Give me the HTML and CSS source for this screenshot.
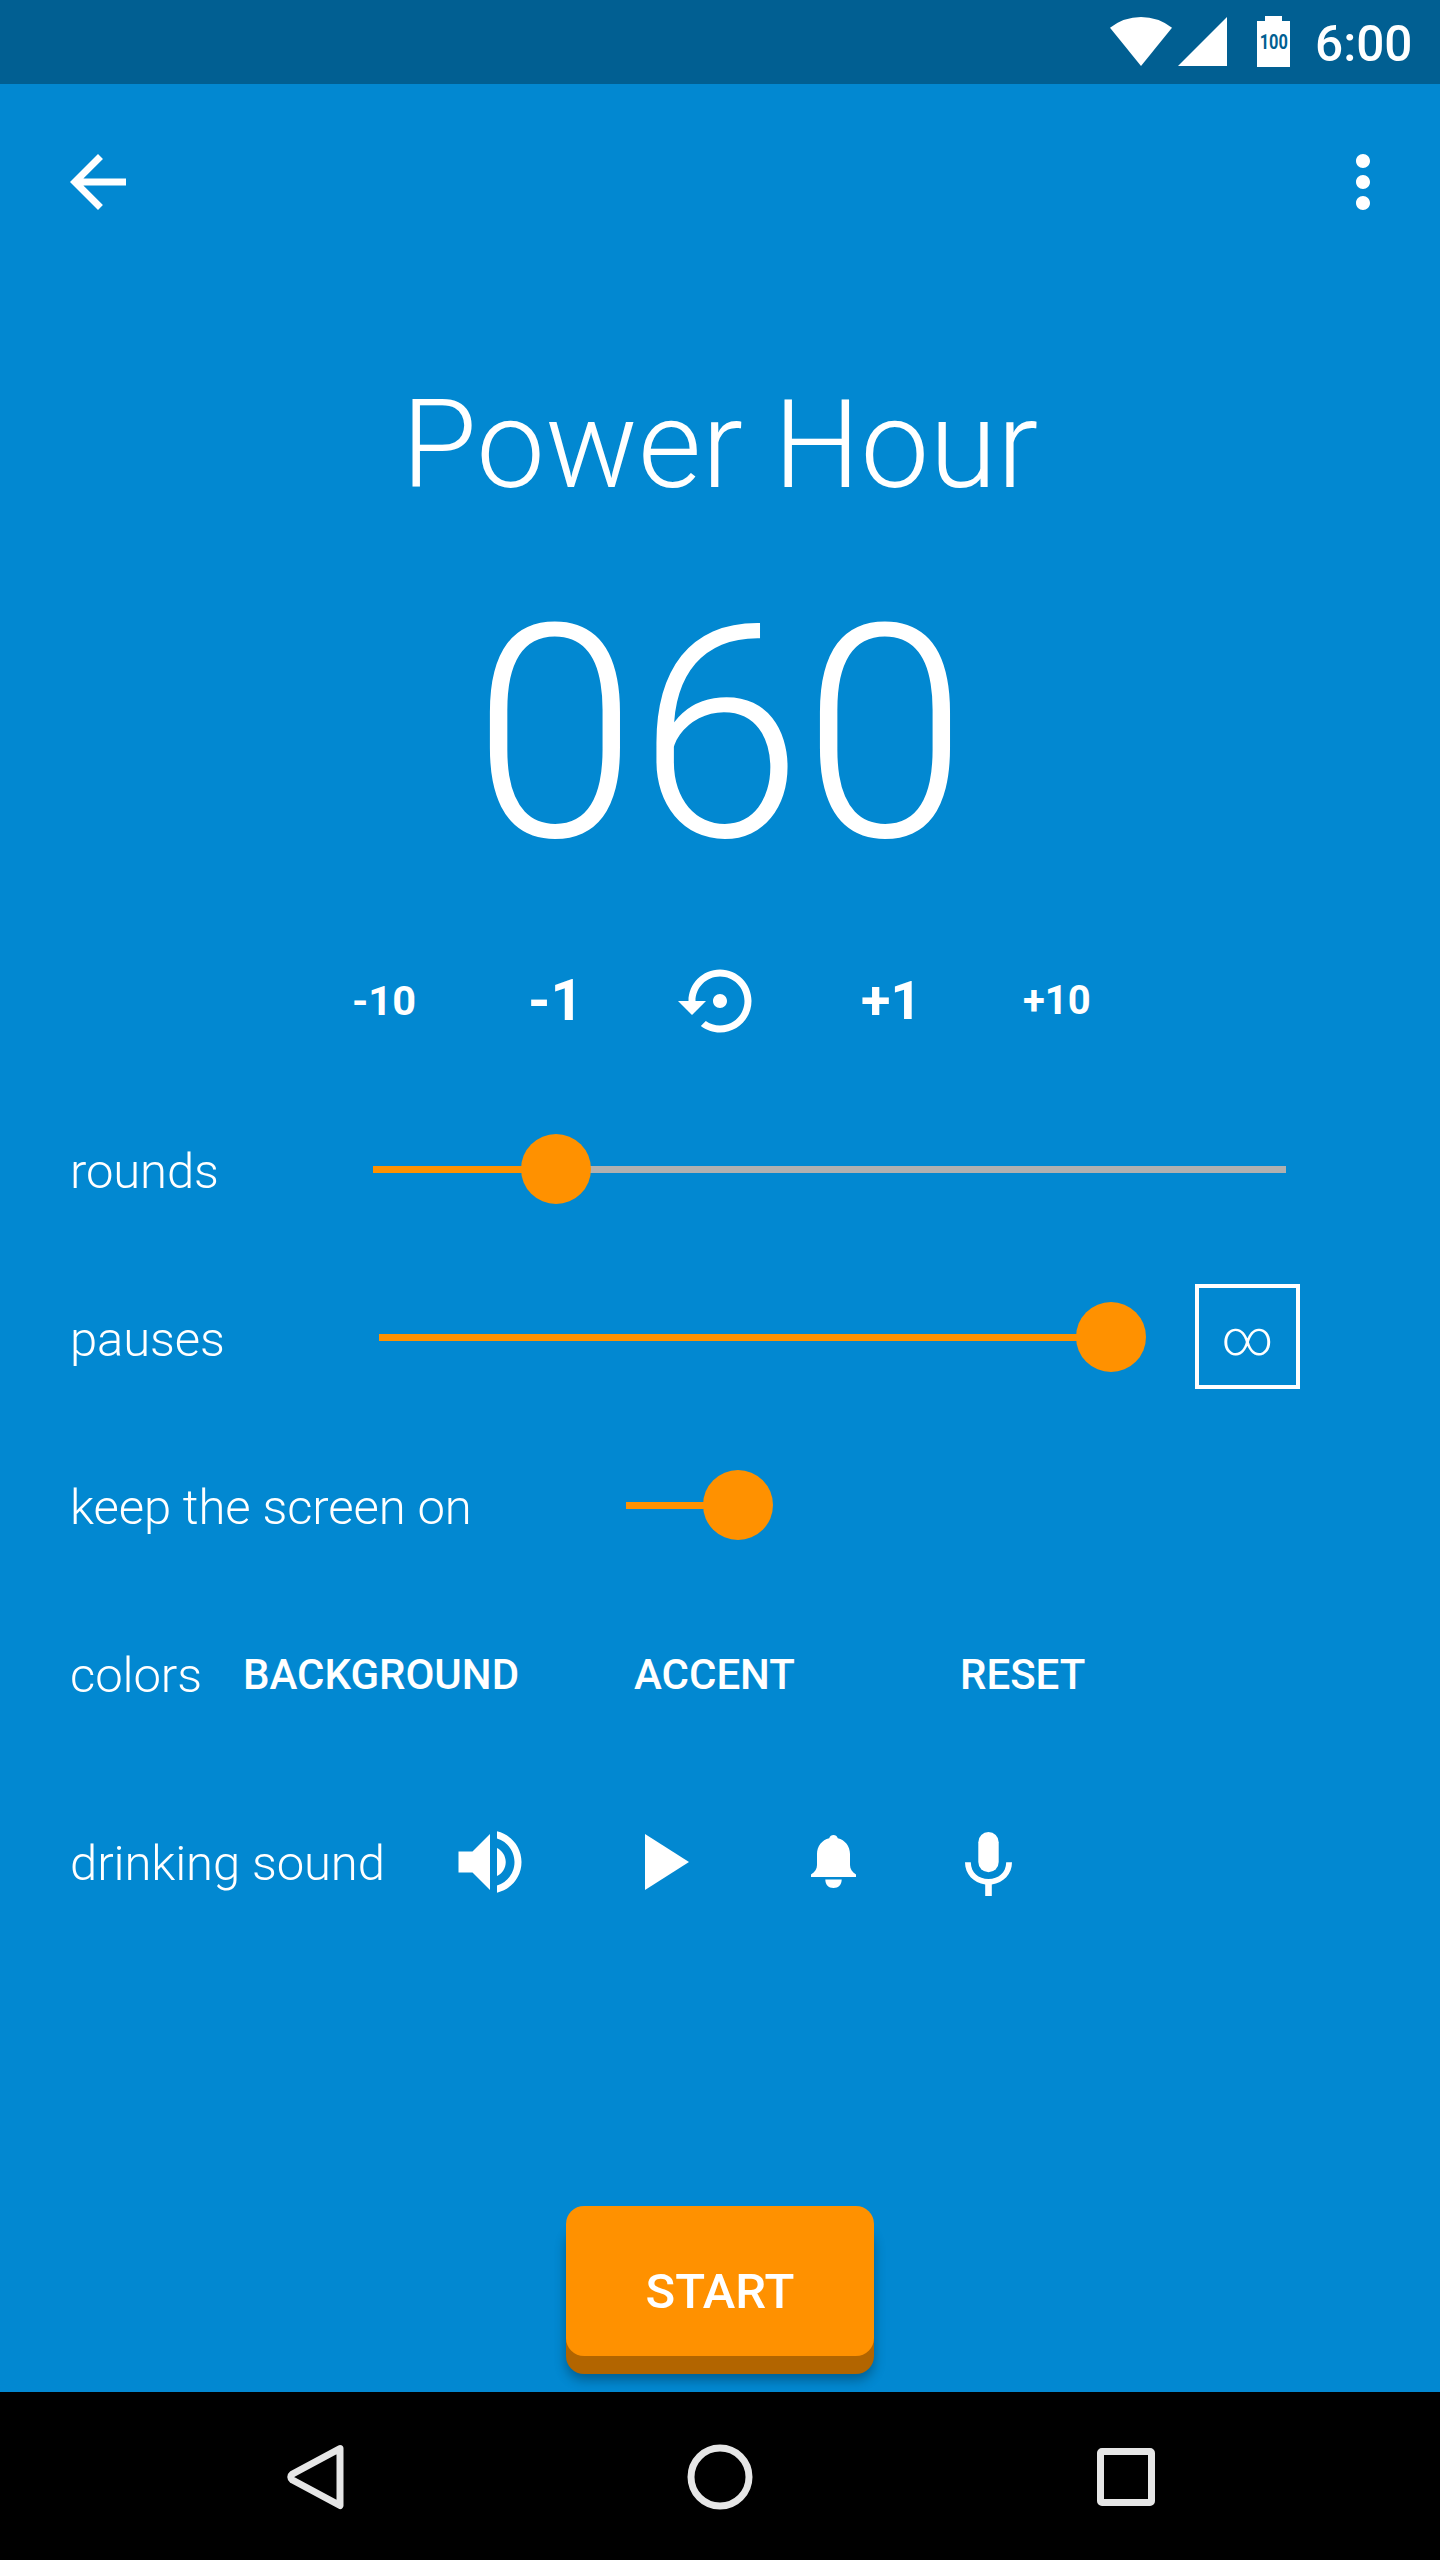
FILE: index.html
```html
<!DOCTYPE html>
<html lang="en">
<head>
<meta charset="utf-8">
<title>Power Hour</title>
<link rel="stylesheet" href="styles.css">
</head>
<body>
<div class="screen">
  <header class="status">
    <svg class="wifi" viewBox="0 0 62 49"><path d="M0 10.7Q14 0 31 0T62 10.7L31 49Z"/></svg>
    <svg class="signal" viewBox="0 0 49 49"><path d="M49 0V49H0Z"/></svg>
    <span class="battery"><span class="level">100</span></span>
    <span class="clock">6:00</span>
  </header>
  <nav class="toolbar">
    <svg class="icon" viewBox="0 0 24 24"><path d="M20 11H7.83l5.59-5.59L12 4l-8 8 8 8 1.41-1.41L7.83 13H20v-2z"/></svg>
    <svg class="icon" viewBox="0 0 24 24"><path d="M12 8c1.1 0 2-.9 2-2s-.9-2-2-2-2 .9-2 2 .9 2 2 2zm0 2c-1.1 0-2 .9-2 2s.9 2 2 2 2-.9 2-2-.9-2-2-2zm0 6c-1.1 0-2 .9-2 2s.9 2 2 2 2-.9 2-2-.9-2-2-2z"/></svg>
  </nav>
  <h1 class="title">Power Hour</h1>
  <div class="counter">060</div>
  <div class="steps">
    <span class="step minus-ten">-10</span>
    <span class="step minus-one">-1</span>
    <svg class="icon" viewBox="0 0 24 24"><path d="M14 12c0-1.1-.9-2-2-2s-2 .9-2 2 .9 2 2 2 2-.9 2-2zm-2-9c-4.97 0-9 4.03-9 9H0l4 4 4-4H5c0-3.87 3.13-7 7-7s7 3.13 7 7-3.13 7-7 7c-1.51 0-2.91-.49-4.06-1.3l-1.42 1.44C8.04 20.3 9.94 21 12 21c4.97 0 9-4.03 9-9s-4.03-9-9-9z"/></svg>
    <span class="step plus-one">+1</span>
    <span class="step plus-ten">+10</span>
  </div>
  <main class="settings">
    <div class="row">
      <span class="label label-rounds">rounds</span>
      <div class="slider slider-rounds"><i class="fill"></i><i class="thumb"></i></div>
    </div>
    <div class="row">
      <span class="label label-pauses">pauses</span>
      <div class="slider slider-pauses"><i class="fill"></i><i class="thumb"></i></div>
      <span class="infinity">∞</span>
    </div>
    <div class="row">
      <span class="label label-screen">keep the screen on</span>
      <div class="slider slider-screen"><i class="fill"></i><i class="thumb"></i></div>
    </div>
    <div class="row">
      <span class="label label-colors">colors</span>
      <span class="action background">BACKGROUND</span>
      <span class="action accent">ACCENT</span>
      <span class="action">RESET</span>
    </div>
    <div class="row sounds">
      <span class="label label-sound">drinking sound</span>
      <svg class="icon" viewBox="0 0 24 24"><path d="M3 9v6h4l5 5V4L7 9H3zm13.5 3c0-1.77-1.02-3.29-2.5-4.03v8.05c1.48-.73 2.5-2.25 2.5-4.02zM14 3.23v2.06c2.89.86 5 3.54 5 6.71s-2.11 5.85-5 6.71v2.06c4.01-.91 7-4.49 7-8.77s-2.99-7.86-7-8.77z"/></svg>
      <svg class="play" viewBox="0 0 44 56"><path d="M0 0L44 28L0 56Z"/></svg>
      <svg class="bell" viewBox="0 0 45 53"><path d="M22.5 0C24.5 0 26 1.2 26.8 3.2C34 5 39 11 39 19V30C39 34 41 37 45 39.4V42H0V39.4C4 37 6 34 6 30V19C6 11 11 5 18.2 3.2C19 1.2 20.5 0 22.5 0ZM14.3 44.5H30.7C30.7 49.5 27.5 53 22.5 53S14.3 49.5 14.3 44.5Z"/></svg>
      <svg class="mic" viewBox="0 0 47 64"><rect x="13.3" y="0" width="20.4" height="40.3" rx="10.2"/><path d="M0 30.3H5.8C6 41 13.5 47 23.5 47S41 41 41.2 30.3H47C47 42 38.5 51 26.8 52.4V64H20.2V52.4C8.5 51 0 42 0 30.3Z"/></svg>
    </div>
  </main>
  <div class="launch"><button class="start">START</button></div>
  <footer class="navbar">
    <svg class="nav-back" viewBox="0 0 57 66"><path d="M53 4.5L5.5 30Q2 33 5.5 36L53 61.5Z"/></svg>
    <svg class="nav-home" viewBox="0 0 66 66"><circle cx="33" cy="33" r="29"/></svg>
    <span class="nav-recent"></span>
  </footer>
</div>
</body>
</html>
```
FILE: styles.css
```css
* { box-sizing: border-box; }

body {
  margin: 0;
  background: #0288d1;
  color: #fff;
  font-family: Roboto, "Liberation Sans", sans-serif;
}

svg { display: block; flex: none; fill: currentColor; }

.screen {
  display: flex;
  flex-direction: column;
  width: 1440px;
  height: 2560px;
  overflow: hidden;
}

.status {
  display: flex;
  justify-content: flex-end;
  height: 84px;
  padding-right: 28px;
  background: #015f92;
}
.wifi { width: 62px; height: 49px; margin: 17px 6px 0 0; }
.signal { width: 49px; height: 49px; margin: 17px 30px 0 0; }
.battery {
  display: flex;
  justify-content: center;
  width: 33px;
  height: 51px;
  margin: 16px 25px 0 0;
  background: #fff;
  clip-path: polygon(0 5px, 8px 5px, 8px 0, 25px 0, 25px 5px, 100% 5px, 100% 100%, 0 100%);
  color: #015f92;
  font-size: 19.5px;
  font-weight: 700;
  line-height: 53px;
}
.level { transform: scaleX(.84); }
.clock {
  width: 97px;
  font-size: 49.5px;
  font-weight: 500;
  line-height: 89px;
}

.toolbar {
  display: flex;
  justify-content: space-between;
  align-items: center;
  height: 196px;
  padding: 0 35px 0 56px;
}
.icon { width: 84px; height: 84px; }

.title {
  height: 144px;
  margin: 93px 0 0;
  font-size: 122.5px;
  font-weight: 300;
  line-height: 144px;
  letter-spacing: .3px;
  text-align: center;
}
.counter {
  height: 350px;
  margin-top: 42px;
  font-size: 297.5px;
  font-weight: 300;
  line-height: 352px;
  text-align: center;
}

.steps {
  display: flex;
  align-items: center;
  height: 84px;
  margin-top: 50px;
  padding-left: 352px;
}
.step { font-weight: 700; line-height: 86px; }
.minus-ten { width: 176px; font-size: 41.5px; }
.minus-one { width: 150px; font-size: 57px; }
.plus-one { width: 162px; margin-left: 99px; font-size: 54px; }
.plus-ten { font-size: 40px; }

.settings { margin-top: 44px; padding-left: 70px; }
.row { display: flex; align-items: center; height: 168px; }
.label {
  font-size: 49px;
  font-weight: 300;
  letter-spacing: -.1px;
  white-space: nowrap;
}
.label-rounds { width: 303px; }
.label-pauses { width: 309px; }
.label-screen { width: 556px; }
.label-colors { width: 173px; }
.label-sound { width: 378px; }

.slider {
  position: relative;
  height: 7px;
  margin-bottom: 3px;
  background: #b0b0b0;
}
.slider-rounds { width: 913px; }
.slider-pauses { width: 732px; }
.slider-screen { width: 112px; }
.fill { display: block; width: 100%; height: 7px; background: #ff9100; }
.slider-rounds .fill { width: 183px; }
.thumb {
  position: absolute;
  top: -32px;
  right: -35px;
  width: 70px;
  height: 70px;
  border-radius: 50%;
  background: #ff9100;
}
.slider-rounds .thumb { left: 148px; }

.infinity {
  width: 105px;
  height: 105px;
  margin: 0 0 5px 84px;
  border: 4px solid #fff;
  font-size: 49px;
  font-weight: 300;
  line-height: 101px;
  text-align: center;
}

.action { padding-bottom: 1px; font-size: 42px; font-weight: 500; }
.background { width: 391px; }
.accent { width: 326px; }

.sounds { height: 206px; padding-bottom: 1px; }
.sounds .label { padding-top: 4px; }
.play { width: 44px; height: 56px; margin-left: 113px; }
.bell { width: 45px; height: 53px; margin-left: 122px; }
.mic { width: 47px; height: 64px; margin: 4px 0 0 109px; }

.launch { display: flex; justify-content: center; margin-top: 241px; }
.start {
  width: 308px;
  height: 150px;
  padding: 21px 0 0;
  border: 0;
  border-radius: 18px;
  background: #ff9100;
  box-shadow: 0 18px 0 #b26500, 0 24px 12px rgba(0, 0, 0, .3);
  color: #fff;
  font: 500 49px Roboto, sans-serif;
}

.navbar {
  display: flex;
  align-items: center;
  height: 168px;
  margin-top: auto;
  padding: 1px 0 0 287px;
  background: #000;
  color: #e6e6e6;
}
.navbar svg { fill: none; stroke: currentColor; stroke-width: 7; stroke-linejoin: round; }
.nav-back { width: 57px; height: 66px; }
.nav-home { width: 66px; height: 66px; margin-left: 343px; }
.nav-recent { width: 58px; height: 58px; margin-left: 344px; border: 7px solid; border-radius: 5px; }
```
